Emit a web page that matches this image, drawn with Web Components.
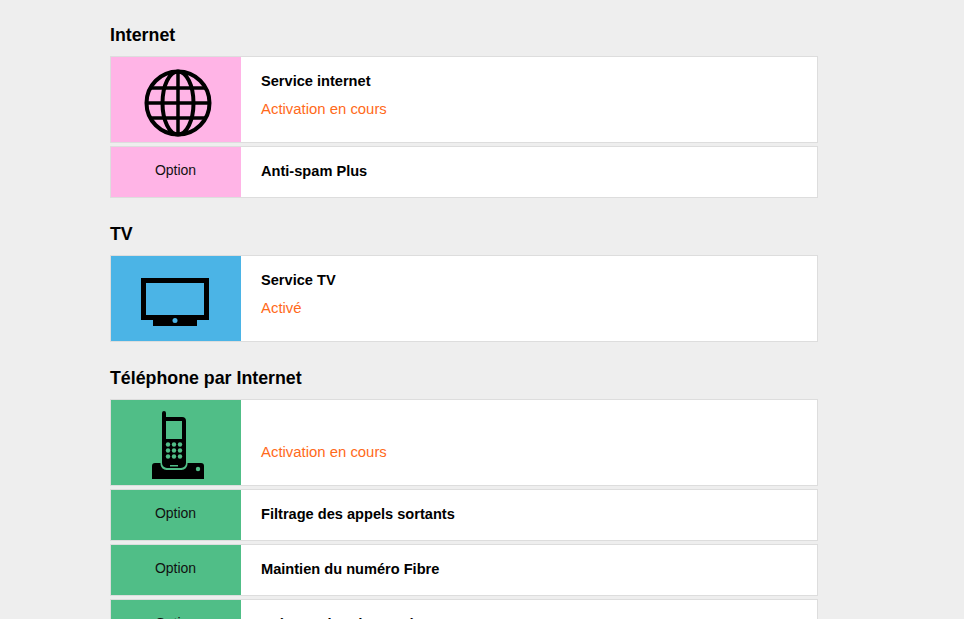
<!DOCTYPE html>
<html lang="fr">
<head>
<meta charset="utf-8">
<title>Services</title>
<style>
  html, body { margin: 0; height: 619px; overflow: hidden; }
  body { background: #eeeeee; font-family: "Liberation Sans", Arial, sans-serif; color: #000; }
</style>
</head>
<body>
<service-page>
  <service-section title="Internet">
    <service-row color="#ffb4e6" status="Activation en cours" name="Service internet">
      <svg slot="icon" style="margin-left:3px" width="68" height="68" viewBox="0 0 68 68" fill="none" stroke="#000" stroke-width="4">
        <circle cx="34" cy="34" r="31.500"/>
        <ellipse cx="34" cy="34" rx="15.500" ry="31.500"/>
        <path stroke-width="3.500" d="M34 2v64M6 19h56M2 34h64M6 49h56"/>
      </svg>
    </service-row>
    <service-row color="#ffb4e6" option name="Anti-spam Plus"></service-row>
  </service-section>
  <service-section title="TV">
    <service-row color="#4bb4e6" status="Activé" name="Service TV">
      <svg slot="icon" style="margin-right:2px" width="68" height="48" viewBox="0 0 68 48">
        <path fill-rule="evenodd" d="M0 0h68v42H56v6H12v-6H0zM5 5v32h58V5z"/>
        <circle cx="34" cy="42.500" r="2.500" fill="#4bb4e6"/>
      </svg>
    </service-row>
  </service-section>
  <service-section title="Téléphone par Internet">
    <service-row color="#50be87" status="Activation en cours">
      <svg slot="icon" style="margin:0 0 1px 4px" width="52" height="68" viewBox="0 0 52 68">
        <path d="M0 55a3 3 0 0 1 3-3h5.500v1a6 6 0 0 0 6 6h15a6 6 0 0 0 6-6v-1H49a3 3 0 0 1 3 3v13H0z"/>
        <path fill-rule="evenodd" d="M10 2a2 2 0 0 1 4 0v4h16a4 4 0 0 1 4 4v42a5 5 0 0 1-5 5H15a5 5 0 0 1-5-5zM14 10v18h16V10z"/>
        <g fill="#50be87">
          <circle cx="16" cy="33.500" r="2.200"/><circle cx="22" cy="33.500" r="2.200"/><circle cx="28" cy="33.500" r="2.200"/>
          <circle cx="16" cy="39.500" r="2.200"/><circle cx="22" cy="39.500" r="2.200"/><circle cx="28" cy="39.500" r="2.200"/>
          <circle cx="16" cy="45.500" r="2.200"/><circle cx="22" cy="45.500" r="2.200"/><circle cx="28" cy="45.500" r="2.200"/>
          <rect x="18" y="54" width="8" height="1.500"/>
          <circle cx="46" cy="58" r="2.200"/>
        </g>
      </svg>
    </service-row>
    <service-row color="#50be87" option name="Filtrage des appels sortants"></service-row>
    <service-row color="#50be87" option name="Maintien du numéro Fibre"></service-row>
    <service-row color="#50be87" option name="Présentation du numéro"></service-row>
  </service-section>
</service-page>

<script>
class ServicePage extends HTMLElement {
  constructor() {
    super();
    this.attachShadow({ mode: "open" });
    this.shadowRoot.innerHTML = `
      <style>
        :host { display: block; width: 708px; margin-left: 110px; padding-top: 24px; }
        div { display: flex; flex-direction: column; gap: 25px; }
      </style>
      <div><slot></slot></div>
    `;
  }
}

class ServiceSection extends HTMLElement {
  constructor() {
    super();
    this.attachShadow({ mode: "open" });
    this.shadowRoot.innerHTML = `
      <style>
        :host { display: block; }
        h2 { margin: 0; padding: 1px 0 10px; font-size: 17.800px; line-height: 21px; font-weight: bold; }
        .rows { display: flex; flex-direction: column; gap: 3px; }
      </style>
      <h2>${this.getAttribute("title")}</h2>
      <div class="rows"><slot></slot></div>
    `;
  }
}

class ServiceRow extends HTMLElement {
  constructor() {
    super();
    this.attachShadow({ mode: "open" });
    const isOption = this.hasAttribute("option");
    const name = this.getAttribute("name") || "";
    const status = this.getAttribute("status");
    this.shadowRoot.innerHTML = `
      <style>
        :host { display: flex; height: ${isOption ? 50 : 85}px; background: #fff; border: 1px solid #dddddd; }
        .swatch { flex: 0 0 130px; box-sizing: border-box; display: flex; align-items: center; justify-content: center;
                  background: ${this.getAttribute("color")}; font-size: 14px; color: #111;
                  ${isOption ? "padding: 0 1px 5px 0;" : "padding-top: 6px;"} }
        .body { flex: 1; display: flex; flex-direction: column; justify-content: center;
                padding: 0 0 ${isOption ? 2 : 10}px 20px; }
        .name { font-size: 14.600px; line-height: 20px; font-weight: bold; min-height: 20px; }
        .status { margin-top: 8px; font-size: 14.900px; line-height: 20px; color: #ff6a1a; }
      </style>
      <div class="swatch">${isOption ? "Option" : '<slot name="icon"></slot>'}</div>
      <div class="body">
        <div class="name">${name}</div>
        ${status ? `<div class="status">${status}</div>` : ""}
      </div>
    `;
  }
}

customElements.define("service-page", ServicePage);
customElements.define("service-section", ServiceSection);
customElements.define("service-row", ServiceRow);
</script>
</body>
</html>
